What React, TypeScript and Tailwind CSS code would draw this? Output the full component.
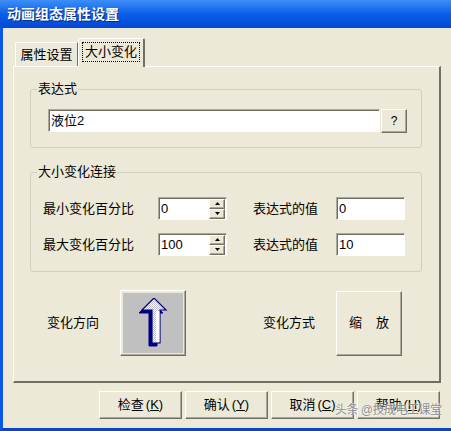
import React from 'react';

const raised =
  'border border-t-white border-l-white border-r-[#716f64] border-b-[#716f64] shadow-[inset_-1px_-1px_0_#aca899]';
const sunken =
  'border border-t-[#aca899] border-l-[#aca899] border-r-white border-b-white shadow-[inset_1px_1px_0_#716f64]';

function Field({ value, width }: { value: string; width: string }) {
  return (
    <div className={`${sunken} ${width} h-[23px] bg-white flex items-center pl-[2px] text-[13px] text-black`}>
      {value}
    </div>
  );
}

function Tri({ up }: { up: boolean }) {
  return (
    <svg width="5" height="3" viewBox="0 0 5 3">
      <polygon points={up ? '2.5,0 5,3 0,3' : '0,0 5,0 2.5,3'} fill="#000" />
    </svg>
  );
}

function SpinField({ value }: { value: string }) {
  return (
    <div className={`${sunken} w-[69px] h-[23px] bg-white flex items-center justify-between pl-[2px] pr-[1px]`}>
      <span className="text-[13px] text-black">{value}</span>
      <div className="flex flex-col">
        <div className={`${raised} w-[16px] h-[10px] bg-[#ece9d8] flex items-center justify-center`}>
          <Tri up />
        </div>
        <div className={`${raised} w-[16px] h-[10px] bg-[#ece9d8] flex items-center justify-center`}>
          <Tri up={false} />
        </div>
      </div>
    </div>
  );
}

function GroupBox({ title, height, children }: { title: string; height: string; children: React.ReactNode }) {
  return (
    <div className={`relative ml-[16px] w-[392px] ${height} border border-[#d0d0bf] rounded-[3px]`}>
      <span className="absolute -top-[9px] left-[6px] bg-[#ece9d8] px-[1px] text-[13px] leading-[16px] text-black">
        {title}
      </span>
      {children}
    </div>
  );
}

function ArrowIcon() {
  const front = '16,0 28,12 22,12 22,45 14,45 14,12 4,12';
  const back = '13,3 25,15 19,15 19,48 11,48 11,15 1,15';
  return (
    <svg width="30" height="50" viewBox="0 0 30 50">
      <defs>
        <pattern id="chk" width="2" height="2" patternUnits="userSpaceOnUse">
          <rect width="2" height="2" fill="#ffffff" />
          <rect width="1" height="1" fill="#b8b8c8" />
          <rect x="1" y="1" width="1" height="1" fill="#b8b8c8" />
        </pattern>
      </defs>
      <polygon points={back} fill="#000080" stroke="#000080" strokeWidth="1" />
      <polygon points="2,14 13,3 16,0 4,12" fill="#000080" />
      <polygon points={front} fill="url(#chk)" stroke="#000080" strokeWidth="1.2" strokeLinejoin="miter" />
      <rect x="18" y="13" width="3.5" height="31" fill="#ffffff" />
    </svg>
  );
}

function BottomButton({ label, hot }: { label: string; hot: string }) {
  return (
    <button className={`${raised} w-[83px] h-[28px] bg-[#ece9d8] flex items-center justify-center text-[13px] text-black`}>
      {label}
      <span className="ml-[2px]">(</span>
      <span className="underline">{hot}</span>
      <span>)</span>
    </button>
  );
}

export default function App() {
  return (
    <div className="relative w-[451px] h-[431px] overflow-hidden flex flex-col bg-[#ece9d8] font-['Liberation_Sans','Noto_Sans_CJK_SC',sans-serif] select-none">
      {/* Title bar */}
      <div className="h-[28px] shrink-0 flex items-center pl-[7px] bg-linear-to-b from-[#3d8ef7] via-[#0a5ee9] to-[#0348d4]">
        <span className="text-white font-bold text-[14px] [text-shadow:1px_1px_0_#0a2a80]">
          动画组态属性设置
        </span>
      </div>

      {/* Window body */}
      <div className="flex-1 flex flex-col border-l-[3px] border-b-[3px] border-l-[#0c58e6] border-b-[#0845cc] pl-[10px] pt-[10px]">
        {/* Tabs */}
        <div className="flex items-end h-[28px] pl-[2px]">
          <div className="w-[63px] h-[24px] border-t border-l border-white border-r border-r-[#716f64] rounded-tl-[2px] flex items-center justify-center text-[13px] text-black">
            属性设置
          </div>
          <div className="relative z-10 -mb-px w-[67px] h-[29px] bg-[#ece9d8] border-t border-l border-white border-r-2 border-r-[#716f64] rounded-t-[2px] flex items-start justify-center pt-[3px]">
            <span className="border border-dotted border-black px-[2px] text-[13px] leading-[18px] text-black">
              大小变化
            </span>
          </div>
        </div>

        {/* Tab panel */}
        <div className="w-[428px] h-[317px] border-t border-l border-white border-r-2 border-b-2 border-r-[#716f64] border-b-[#716f64] flex flex-col">
          <div className="mt-[22px]">
            <GroupBox title="表达式" height="h-[59px]">
              <div className="flex items-start pl-[17px] pt-[19px]">
                <Field value="液位2" width="w-[332px]" />
                <button className={`${raised} ml-px w-[26px] h-[24px] bg-[#ece9d8] text-[12px] text-black flex items-center justify-center`}>
                  ?
                </button>
              </div>
            </GroupBox>
          </div>

          <div className="mt-[24px]">
            <GroupBox title="大小变化连接" height="h-[100px]">
              <div className="flex flex-col gap-[13px] pl-[12px] pt-[24px]">
                <div className="flex items-center">
                  <span className="w-[115px] text-[13px] text-black">最小变化百分比</span>
                  <SpinField value="0" />
                  <span className="ml-[26px] w-[83px] text-[13px] text-black">表达式的值</span>
                  <Field value="0" width="w-[69px]" />
                </div>
                <div className="flex items-center">
                  <span className="w-[115px] text-[13px] text-black">最大变化百分比</span>
                  <SpinField value="100" />
                  <span className="ml-[26px] w-[83px] text-[13px] text-black">表达式的值</span>
                  <Field value="10" width="w-[69px]" />
                </div>
              </div>
            </GroupBox>
          </div>

          <div className="mt-[18px] flex items-center pl-[33px]">
            <span className="w-[73px] text-[13px] text-black">变化方向</span>
            <div className={`${raised} w-[66px] h-[66px] bg-[#ece9d8] p-[2px]`}>
              <div className="w-full h-full bg-[#c0c0c0] flex items-center justify-center">
                <ArrowIcon />
              </div>
            </div>
            <span className="ml-[77px] w-[73px] text-[13px] text-black">变化方式</span>
            <button className={`${raised} w-[66px] h-[65px] bg-[#ece9d8] flex items-center justify-center gap-[14px] text-[13px] text-black`}>
              <span>缩</span>
              <span>放</span>
            </button>
          </div>
        </div>

        {/* Bottom buttons */}
        <div className="mt-[8px] flex gap-[3px] pl-[86px]">
          <BottomButton label="检查" hot="K" />
          <BottomButton label="确认" hot="Y" />
          <BottomButton label="取消" hot="C" />
          <BottomButton label="帮助" hot="H" />
        </div>
      </div>

      {/* Watermark */}
      <span className="absolute left-[335px] top-[403px] whitespace-nowrap text-[12px] leading-[14px] tracking-[-0.5px] text-[#8c8c8c] [text-shadow:0_0_2px_white,0_0_1px_white]">
        头条 @技成电工课堂
      </span>
    </div>
  );
}
